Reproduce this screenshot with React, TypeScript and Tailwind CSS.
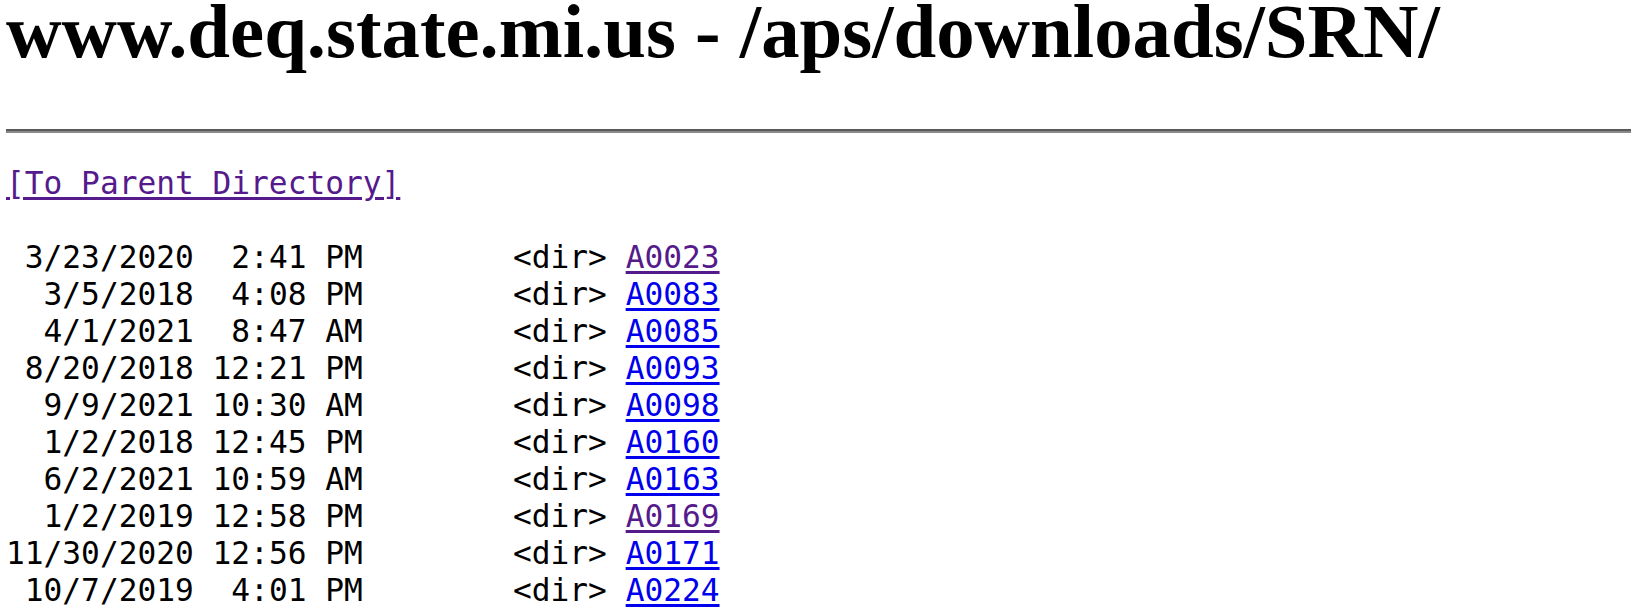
const rows = [
  { date: "3/23/2020", time: "2:41 PM", name: "A0023", visited: true },
  { date: "3/5/2018", time: "4:08 PM", name: "A0083", visited: false },
  { date: "4/1/2021", time: "8:47 AM", name: "A0085", visited: false },
  { date: "8/20/2018", time: "12:21 PM", name: "A0093", visited: false },
  { date: "9/9/2021", time: "10:30 AM", name: "A0098", visited: false },
  { date: "1/2/2018", time: "12:45 PM", name: "A0160", visited: false },
  { date: "6/2/2021", time: "10:59 AM", name: "A0163", visited: false },
  { date: "1/2/2019", time: "12:58 PM", name: "A0169", visited: true },
  { date: "11/30/2020", time: "12:56 PM", name: "A0171", visited: false },
  { date: "10/7/2019", time: "4:01 PM", name: "A0224", visited: false },
];

export default function App() {
  return (
    <div className="min-h-screen bg-white pl-[6px] text-black overflow-hidden">
      <h1 className="mt-[-12px] whitespace-nowrap font-['Liberation_Serif',serif] text-[76.8px] leading-[88px] font-bold">
        www.deq.state.mi.us - /aps/downloads/SRN/
      </h1>
      <hr className="mt-[53px] h-0 border-0 border-t-[2.5px] border-b-[2.5px] border-t-[#5a5a5a] border-b-[#8a8a8a]" />
      <pre className="mt-[32px] font-['DejaVu_Sans_Mono',monospace] text-[31.2px] leading-[37px]">
        <a href="#" className="text-[#551a8b] underline underline-offset-[3px]">
          [To Parent Directory]
        </a>
        <br />
        <br />
        {rows.map((r) => (
          <div key={r.name}>
            {r.date.padStart(10, " ")} {r.time.padStart(8, " ")}        &lt;dir&gt;{" "}
            <a
              href="#"
              className={
                r.visited
                  ? "text-[#551a8b] underline underline-offset-[3px]"
                  : "text-[#0000ee] underline underline-offset-[3px]"
              }
            >
              {r.name}
            </a>
          </div>
        ))}
      </pre>
    </div>
  );
}
